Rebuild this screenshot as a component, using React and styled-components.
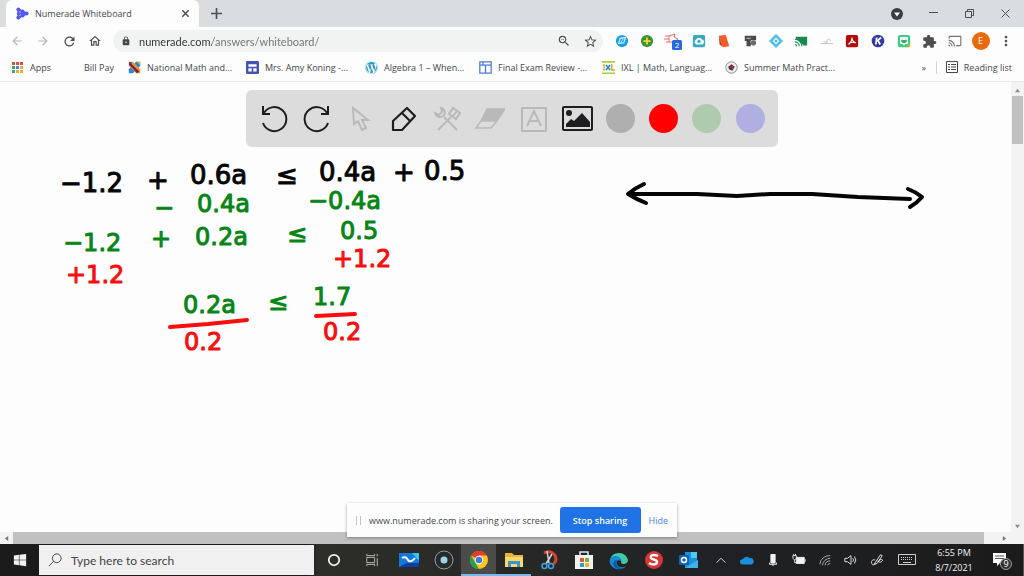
import React from "react";
import styled, { createGlobalStyle } from "styled-components";
import { FaWindows, FaWordpress } from "react-icons/fa";
import {
  MdArrowBack,
  MdArrowForward,
  MdCast,
  MdExtension,
  MdLock,
  MdMoreVert,
  MdOutlineHome,
  MdRefresh,
  MdStarBorder,
  MdZoomOut,
} from "react-icons/md";

const GlobalStyles = createGlobalStyle`
  * {
    box-sizing: border-box;
  }
  body {
    margin: 0;
    font-family: "Open Sans", "Noto Sans", sans-serif;
    font-size: 9px;
    color: #44474b;
  }
  button, input {
    margin: 0;
    padding: 0;
    border: 0;
    background: none;
    font: inherit;
    color: inherit;
  }
  input {
    font-family: Lato, "Open Sans", sans-serif;
  }
  a {
    color: inherit;
    text-decoration: none;
  }
  svg {
    display: block;
    flex-shrink: 0;
  }
`;

const Page = styled.div`
  display: flex;
  flex-direction: column;
  height: 100vh;
  overflow: hidden;
  background: #fdfdfd;
`;

const TabStrip = styled.header`
  display: flex;
  align-items: stretch;
  height: 27px;
  padding-left: 6px;
  background: #dadddf;
`;

const Tab = styled.div`
  display: flex;
  align-items: center;
  gap: 6px;
  width: 193px;
  padding: 0 8px 0 10px;
  border-radius: 6px 6px 0 0;
  background: #fdfdfd;
  span {
    flex: 1;
    white-space: nowrap;
  }
`;

const IconButton = styled.button`
  display: flex;
  align-items: center;
  justify-content: center;
  width: ${(props) => props.$width || "26px"};
  color: ${(props) => props.$color || "#4b4e52"};
`;

const WindowControls = styled.div`
  display: flex;
  margin-left: auto;
`;

const Toolbar = styled.nav`
  display: flex;
  align-items: center;
  height: 28px;
  padding: 0 5px 0 4px;
`;

const AddressBar = styled.div`
  display: flex;
  align-items: center;
  flex: 1;
  height: 22px;
  margin: 0 6px 0 5px;
  padding-left: 8px;
  border-radius: 11px;
  background: #f1f2f2;
  input {
    flex: 1;
    min-width: 0;
    margin-left: 8px;
    font-size: 11px;
    outline: none;
    color: transparent;
    background: linear-gradient(90deg, #2f3336 73px, #6c7074 73px);
    background-clip: text;
  }
`;

const Extensions = styled.div`
  display: flex;
  flex: 0 0 410px;
  button {
    flex: 1;
    width: auto;
  }
`;

const Avatar = styled.span`
  width: 18px;
  height: 18px;
  border-radius: 50%;
  background: #ea6a0b;
  color: #fff;
  line-height: 18px;
  text-align: center;
`;

const Bookmarks = styled.nav`
  display: grid;
  grid-template-columns: 60px 57px 118px 119px 114px 123px 123px 1fr auto auto;
  align-items: center;
  height: 27px;
  padding: 0 12px 2px 11px;
  border-bottom: 1px solid #e6e6e6;
`;

const Bookmark = styled.a`
  display: flex;
  align-items: center;
  gap: 6px;
  white-space: nowrap;
`;

const ReadingList = styled(Bookmark)`
  margin-left: 8px;
  padding-left: 9px;
  border-left: 1px solid #d5d5d5;
`;

const Viewport = styled.main`
  position: relative;
  flex: 1;
  display: grid;
  grid-template-columns: 1fr 13px;
  grid-template-rows: 1fr 12px;
  min-height: 0;
`;

const Canvas = styled.svg`
  width: 100%;
  height: 100%;
  min-height: 0;
  overflow: visible;
  path {
    fill: none;
    stroke-width: 4px;
    stroke-linecap: round;
    stroke-linejoin: round;
  }
`;

const Note = styled.text`
  font-family: "DejaVu Sans", sans-serif;
  font-size: ${(props) => (props.$large ? "26px" : "24px")};
  fill: ${(props) => props.$color};
  stroke: ${(props) => props.$color};
  stroke-width: 1px;
  stroke-linejoin: round;
`;

const VerticalScroll = styled.div`
  display: flex;
  flex-direction: column;
  align-items: center;
  padding: 6px 0 3px;
  background: #f3f3f3;
  color: #8a8a8a;
  i {
    width: 11px;
    height: 48px;
    margin: 3px 0 auto;
    background: #c1c1c1;
  }
`;

const HorizontalScroll = styled.div`
  grid-column: 1 / -1;
  display: flex;
  align-items: center;
  padding: 0 17px 0 4px;
  background: #f3f3f3;
  color: #777;
  i {
    flex: 1;
    align-self: stretch;
    margin: 0 18px 0 4px;
    background: #c1c1c1;
  }
`;

const DrawTools = styled.div`
  position: absolute;
  top: 8px;
  left: 50%;
  transform: translateX(-50%);
  display: flex;
  width: 532px;
  height: 57px;
  padding: 0 6px;
  border-radius: 6px;
  background: #dcdcdc;
`;

const Tool = styled.button`
  display: flex;
  flex: 1;
  align-items: center;
  justify-content: center;
  color: ${(props) => (props.$muted ? "#b9b9b9" : "#1c1e1f")};
`;

const Swatch = styled.span`
  width: 29px;
  height: 29px;
  border-radius: 50%;
  background: ${(props) => props.$color};
`;

const ShareBar = styled.div`
  position: absolute;
  bottom: 7px;
  left: 50%;
  transform: translateX(-50%);
  display: flex;
  align-items: center;
  width: 330px;
  height: 34px;
  padding: 0 9px;
  background: #fdfdfd;
  box-shadow: 0 1px 3px rgba(0, 0, 0, 0.35);
  p {
    flex: 1;
    margin: 0 0 0 8px;
    white-space: nowrap;
  }
  a {
    margin-left: 8px;
    color: #4285e8;
  }
`;

const Grip = styled.i`
  width: 5px;
  height: 9px;
  border: solid #c4c4c4;
  border-width: 0 1px;
`;

const StopButton = styled.button`
  flex-shrink: 0;
  width: 81px;
  height: 26px;
  border-radius: 3px;
  background: #1f73e4;
  color: #fff;
  font-weight: 600;
`;

const Taskbar = styled.footer`
  display: flex;
  height: 32px;
  background: linear-gradient(90deg, #1b1b1b 0 30%, #2d2e28 31%, #292a27 45%, #202124 70%, #1b1b1b);
  color: #f2f2f2;
`;

const SearchBox = styled.label`
  display: flex;
  align-items: center;
  gap: 9px;
  width: 275px;
  margin: 1px 1px 1px 0;
  padding-left: 9px;
  background: #f0f0f0;
  color: #333;
  input {
    flex: 1;
    min-width: 0;
    font-size: 12px;
    outline: none;
  }
  input::placeholder {
    color: #444;
    opacity: 1;
  }
`;

const TaskButton = styled.button`
  display: flex;
  align-items: center;
  justify-content: center;
  width: ${(props) => props.$width || "35px"};
  background: ${(props) => (props.$active ? "#4b4c4a" : "transparent")};
  border-bottom: 2px solid ${(props) => (props.$open ? "#76b9ed" : "transparent")};
  border-top: 2px solid transparent;
`;

const Tray = styled.div`
  display: flex;
  margin-left: auto;
  padding-right: 3px;
  border-right: 1px solid #555;
`;

const Clock = styled.time`
  width: 60px;
  padding-top: 1px;
  font-size: 9px;
  line-height: 15px;
  text-align: center;
  white-space: nowrap;
`;

const Icon = ({ size = 14, box = 16, children, ...rest }) => (
  <svg
    width={size}
    height={size}
    viewBox={`0 0 ${box} ${box}`}
    fill="none"
    stroke="currentColor"
    aria-hidden="true"
    {...rest}
  >
    {children}
  </svg>
);

const Arrow = ({ d }) => (
  <Icon size={5} box={6} fill="currentColor" stroke="none">
    <path d={d} />
  </Icon>
);

const NumeradeLogo = () => (
  <Icon size={13} stroke="#5b5ff0" strokeWidth="2.500">
    <path d="M3 2.500v11M3 3l10 5M3 13l10-5M3 8h9" />
    <g fill="#5357ee" stroke="none">
      <circle cx="3" cy="3" r="2.500" />
      <circle cx="3" cy="8" r="2" />
      <circle cx="3" cy="13" r="2.500" />
      <circle cx="8" cy="5.500" r="2.500" />
      <circle cx="8" cy="10.500" r="2.500" />
      <circle cx="13" cy="8" r="2.500" />
    </g>
  </Icon>
);

const extensions = [
  {
    name: "Compass",
    icon: (
      <Icon stroke="none">
        <circle cx="8" cy="8" r="7" fill="#16a0ea" />
        <path d="M4 11l2-6 6-1-2 6z" fill="none" stroke="#d9f2ff" strokeWidth="1.3" />
        <path d="M6.5 10l3-4.5" stroke="#d9f2ff" />
      </Icon>
    ),
  },
  {
    name: "Add",
    icon: (
      <Icon stroke="none">
        <circle cx="8" cy="8" r="7" fill="#3c9138" />
        <path d="M8 4v8M4 8h8" stroke="#f2dd28" strokeWidth="2" />
      </Icon>
    ),
  },
  {
    name: "Recorder, 2 new",
    icon: (
      <Icon size={18} box={18} stroke="#ee6b69">
        <path d="M1 4h4M0 7h5M2 10h3M5 4l6-2-1 3 4 2-4 3H5z" />
        <rect x="8" y="8" width="10" height="10" rx="1.5" fill="#2869df" stroke="none" />
        <text x="13" y="16" fill="#fff" stroke="none" fontSize="8" textAnchor="middle">2</text>
      </Icon>
    ),
  },
  {
    name: "Cloud",
    icon: (
      <Icon stroke="none">
        <rect x="1" y="1" width="14" height="14" rx="2" fill="#39a9bd" />
        <path d="M5 12a3 3 0 01-.5-5.5 4 4 0 017-.2A3 3 0 0112 12z" fill="#e9fbff" />
        <circle cx="8" cy="8.5" r="1.8" fill="#39a9bd" />
      </Icon>
    ),
  },
  {
    name: "Office",
    icon: (
      <Icon stroke="none">
        <path d="M2 2l8-1 4 13-7 1z" fill="#f45b2b" />
        <path d="M2 2l5 13-4-3z" fill="#c73f16" />
      </Icon>
    ),
  },
  {
    name: "Camera",
    icon: (
      <Icon stroke="none">
        <path d="M2 2h13v5H9v7H4V8H2z" fill="#4b4b4b" />
        <path d="M4 5h5M8 9h6M10 12h4" stroke="#a8a8a8" strokeWidth="1.5" />
        <circle cx="12" cy="10" r="3" fill="#6c6c6c" />
      </Icon>
    ),
  },
  {
    name: "Diamond",
    icon: (
      <Icon stroke="none">
        <path d="M8 0l8 8-8 8-8-8z" fill="#51bceb" />
        <path d="M8 4l4 4-4 4-4-4z" fill="#d9f4ff" />
        <circle cx="8" cy="8" r="1.5" fill="#51bceb" />
      </Icon>
    ),
  },
  {
    name: "Cast classroom",
    icon: (
      <Icon stroke="none">
        <path d="M2 3h13v10h-4L2 5z" fill="#188a50" />
        <path d="M1 6a8 8 0 018 8M1 9a5 5 0 015 5M1 12a2 2 0 012 2" stroke="#188a50" strokeWidth="1.3" />
      </Icon>
    ),
  },
  {
    name: "Hanger",
    icon: (
      <Icon stroke="#bdbdbd">
        <path d="M1 11h14M8 11V7q3-3 4 1M4 9h4" />
      </Icon>
    ),
  },
  {
    name: "Acrobat",
    icon: (
      <Icon>
        <rect x="1" y="1" width="14" height="14" rx="2" fill="#b30b0b" stroke="none" />
        <path d="M4 12c2-1 4-5 4-8M8 4c0 3 2 6 4.500 6M4 11c2-1.500 5-2 8-1" stroke="#fff" strokeWidth="1.2" />
      </Icon>
    ),
  },
  {
    name: "Kami",
    icon: (
      <Icon>
        <circle cx="8" cy="8" r="7.2" fill="#2f3aa5" stroke="none" />
        <path d="M6.500 4l-1 8M11.500 4l-5 4.500M8 7.500l2.500 4.500" stroke="#fff" strokeWidth="2" />
      </Icon>
    ),
  },
  {
    name: "Bitmoji",
    icon: (
      <Icon>
        <rect x="1" y="1" width="14" height="14" rx="2.500" fill="#3acb85" stroke="none" />
        <path d="M3.500 3.500h9v8h-3l-1.500 2-1.500-2h-3z" fill="#fff" stroke="none" />
        <path d="M5 7.500h6c-.5 3.500-5.500 3.500-6 0zM6 5v1M10 5v1" fill="#2fa76d" stroke="#2fa76d" />
        <path d="M12 12h3v2l-1 1h-2z" fill="#f5a623" stroke="none" />
      </Icon>
    ),
  },
  { name: "Extensions", icon: <MdExtension size={15} /> },
  { name: "Cast", icon: <MdCast size={14} color="#777" /> },
  { name: "Profile", icon: <Avatar>E</Avatar> },
  { name: "Menu", icon: <MdMoreVert size={16} /> },
];

const dots = ["#df4b3f", "#df4b3f", "#d44c45", "#43a564", "#4687d9", "#e6b03a", "#43a564", "#e6b03a", "#e6b03a"];

const bookmarks = [
  {
    label: "Apps",
    icon: (
      <Icon size={13} box={13} stroke="none">
        {dots.map((color, i) => (
          <rect key={i} x={1 + (i % 3) * 4} y={1 + Math.floor(i / 3) * 4} width="3" height="3" fill={color} />
        ))}
      </Icon>
    ),
  },
  { label: "Bill Pay", icon: <Icon size={7} /> },
  {
    label: "National Math and...",
    icon: (
      <Icon size={13} stroke="none">
        <path d="M15 1v5l-9 9H1v-5l9-9z" fill="#278bd0" />
        <path d="M11 1h4v4z" fill="#f5b12b" />
        <path d="M1 1l5 0 9 9v5h-5L1 6z" fill="#f09a24" />
        <path d="M3 2l11 11-3 2L1 4z" fill="#7d1f5a" />
        <path d="M1 1l4 1-3 4z" fill="#333b8e" />
      </Icon>
    ),
  },
  {
    label: "Mrs. Amy Koning -...",
    icon: (
      <Icon size={13} stroke="none">
        <rect width="16" height="16" rx="1.500" fill="#4354b2" />
        <path d="M3 4h10v3H3zM3 9h4v4H3zM9 9h4v4H9z" fill="#fff" />
      </Icon>
    ),
  },
  { label: "Algebra 1 – When...", icon: <FaWordpress size={13} color="#2b9cc4" /> },
  {
    label: "Final Exam Review -...",
    icon: (
      <Icon size={13} stroke="#4b78d8" strokeWidth="1.500">
        <path d="M1 1h14v14H1zM1 5h14M8 5v10M5 1v4" />
      </Icon>
    ),
  },
  {
    label: "IXL | Math, Languag...",
    icon: (
      <Icon size={13} stroke="none">
        <path d="M0 1h16M0 15h16" stroke="#9fd431" strokeWidth="2" />
        <path d="M1 5h3M1 11h3M2.500 5v6" stroke="#e0a82c" strokeWidth="1.500" />
        <path d="M5 5l5 6M10 5l-5 6" stroke="#1f8fcb" strokeWidth="2" />
        <path d="M12 4v7h4" stroke="#e0a82c" strokeWidth="2" />
      </Icon>
    ),
  },
  {
    label: "Summer Math Pract...",
    icon: (
      <Icon size={13} stroke="#777">
        <circle cx="8" cy="8" r="7" fill="#eee" />
        <path d="M4 7l4-3 4 3-3 5-4-2z" fill="#333c4a" stroke="none" />
        <path d="M8 5l3 2-2 3-3-2z" fill="#c3232f" stroke="none" />
      </Icon>
    ),
  },
];

const tools = [
  {
    name: "Undo",
    icon: (
      <Icon size={28} box={28} strokeWidth="2">
        <path d="M3 18a12 12 0 1 0 .5-9M3 1v8h7" />
      </Icon>
    ),
  },
  {
    name: "Redo",
    icon: (
      <Icon size={28} box={28} strokeWidth="2">
        <path d="M25 18a12 12 0 1 1-.5-9M25 1v8h-7" />
      </Icon>
    ),
  },
  {
    name: "Select",
    muted: true,
    icon: (
      <Icon size={28} box={28} strokeWidth="2">
        <path d="M7 3l1 16 4-3 4 9 4-2-4-8h6z" />
      </Icon>
    ),
  },
  {
    name: "Pen",
    icon: (
      <Icon size={28} box={28} strokeWidth="2.200" strokeLinejoin="round">
        <path d="M3 25v-9L17 3l8 8-13 14zM12 8l8 8" />
      </Icon>
    ),
  },
  {
    name: "Tools",
    muted: true,
    icon: (
      <Icon size={28} box={28} strokeWidth="2">
        <path d="M5 25l13-13M24 25L11 12M2 8c1 4 5 5 8 3s2-7-2-8l1 4-3 3zM16 9l4-6 7 5-4 6zM20 11l4-5" />
      </Icon>
    ),
  },
  {
    name: "Eraser",
    muted: true,
    icon: (
      <Icon size={30} box={30} strokeWidth="1.500">
        <path d="M12 5h18l-8 12H6z" fill="currentColor" />
        <path d="M6 17l-5 7h15l6-7" />
      </Icon>
    ),
  },
  {
    name: "Text",
    muted: true,
    icon: (
      <Icon size={28} box={28} strokeWidth="2">
        <path d="M2 3h24v23H2zM7 21l7-15 7 15M9 16h10" />
      </Icon>
    ),
  },
  {
    name: "Image",
    icon: (
      <Icon size={32} box={32} strokeWidth="2">
        <rect x="2" y="4" width="29" height="23" rx="1" />
        <circle cx="8" cy="10" r="3" fill="currentColor" stroke="none" />
        <path d="M5 24v-3l5-5 3 2 8-8 8 9v5z" fill="currentColor" stroke="none" />
      </Icon>
    ),
  },
];

const swatches = [
  { name: "Grey", color: "#afafaf" },
  { name: "Red", color: "#fe0000" },
  { name: "Green", color: "#afcbaf" },
  { name: "Purple", color: "#b0afe2" },
];

const BLACK = "#050505";
const GREEN = "#088517";
const RED = "#f5100f";

const notes = [
  { x: 60, y: 110, color: BLACK, text: "−1.2", large: true },
  { x: 147, y: 107, color: BLACK, text: "+", large: true },
  { x: 190, y: 102, color: BLACK, text: "0.6a", large: true },
  { x: 276, y: 102, color: BLACK, text: "≤", large: true },
  { x: 319, y: 99, color: BLACK, text: "0.4a", large: true },
  { x: 393, y: 99, color: BLACK, text: "+", large: true },
  { x: 424, y: 98, color: BLACK, text: "0.5", large: true },
  { x: 154, y: 134, color: GREEN, text: "−" },
  { x: 197, y: 130, color: GREEN, text: "0.4a" },
  { x: 308, y: 127, color: GREEN, text: "−0.4a" },
  { x: 63, y: 169, color: GREEN, text: "−1.2" },
  { x: 151, y: 165, color: GREEN, text: "+" },
  { x: 195, y: 163, color: GREEN, text: "0.2a" },
  { x: 287, y: 160, color: GREEN, text: "≤" },
  { x: 340, y: 157, color: GREEN, text: "0.5" },
  { x: 66, y: 201, color: RED, text: "+1.2" },
  { x: 333, y: 185, color: RED, text: "+1.2" },
  { x: 183, y: 231, color: GREEN, text: "0.2a" },
  { x: 268, y: 228, color: GREEN, text: "≤" },
  { x: 313, y: 223, color: GREEN, text: "1.7" },
  { x: 184, y: 268, color: RED, text: "0.2" },
  { x: 323, y: 258, color: RED, text: "0.2" },
];

const strokes = [
  { color: RED, d: "M170 245L208 242L247 238" },
  { color: RED, d: "M316 234L355 232" },
  { color: BLACK, d: "M630 112H697L737 114L770 112H812L858 115L910 117" },
  { color: BLACK, d: "M644 102Q635 106 628 112Q636 117 646 121" },
  { color: BLACK, d: "M908 107Q916 110 922 115Q917 121 910 125" },
];

const taskApps = [
  {
    name: "Whiteboard",
    icon: (
      <Icon size={20} box={20} stroke="none">
        <path d="M0 3h20v14H0z" fill="#1479dc" />
        <path d="M13 3h7v8z" fill="#35c4ef" />
        <path d="M0 17l8-4h12v4z" fill="#0c3f9e" />
        <path d="M3 8c3-2 5 0 6 2s4 2 7-2" stroke="#fff" strokeWidth="2" />
      </Icon>
    ),
  },
  {
    name: "Recorder",
    icon: (
      <Icon size={20} box={20} stroke="#88a1ae">
        <circle cx="10" cy="10" r="9" />
        <circle cx="10" cy="10" r="3.500" fill="#9bd1ee" stroke="none" />
      </Icon>
    ),
  },
  {
    name: "Chrome",
    active: true,
    open: true,
    icon: (
      <Icon size={18} box={18} stroke="none">
        <circle cx="9" cy="9" r="9" fill="#f9c716" />
        <path d="M9 9L1.200 4.500A9 9 0 0116.800 4.500H9z" fill="#e33d31" />
        <path d="M1.200 4.500L5.500 12 9 18A9 9 0 011.200 4.500z" fill="#26a04e" />
        <circle cx="9" cy="9" r="4.200" fill="#fff" />
        <circle cx="9" cy="9" r="3.300" fill="#3b79e5" />
      </Icon>
    ),
  },
  {
    name: "File Explorer",
    open: true,
    icon: (
      <Icon size={18} box={18} stroke="none">
        <path d="M0 2h7l2 2h9v12H0z" fill="#e9b53c" />
        <path d="M0 6h18v10H0z" fill="#fbd867" />
        <path d="M3 10h12v6h-3v-3H6v3H3z" fill="#3c93cf" />
      </Icon>
    ),
  },
  {
    name: "Snip",
    icon: (
      <Icon size={20} box={20}>
        <path d="M5 3c9-4 15 4 10 11" stroke="#d9432b" strokeWidth="3" />
        <path d="M8 1l2 12M13 4L7 14" stroke="#d4d8da" strokeWidth="1.500" />
        <circle cx="5.500" cy="16" r="2.500" stroke="#3da4df" strokeWidth="1.500" />
        <circle cx="12" cy="16" r="2.500" stroke="#3da4df" strokeWidth="1.500" />
      </Icon>
    ),
  },
  {
    name: "Store",
    icon: (
      <Icon size={20} box={20}>
        <path d="M6 6V2h8v4" stroke="#e8e8e8" strokeWidth="1.500" />
        <path d="M1 5h18v14H1z" fill="#f2f2f2" stroke="none" />
        <g stroke="none">
          <path d="M6 8h4v4H6z" fill="#e5532c" />
          <path d="M11 8h4v4h-4z" fill="#79b52c" />
          <path d="M6 13h4v4H6z" fill="#2a9de0" />
          <path d="M11 13h4v4h-4z" fill="#efb51f" />
        </g>
      </Icon>
    ),
  },
  {
    name: "Edge",
    icon: (
      <Icon size={20} box={20} stroke="none">
        <path d="M1 9a9.500 9.500 0 0118 1c0 4-5 5-7 3 1-3-1-6-4-6-4 0-7 2-7 2z" fill="#44c9a8" />
        <path d="M1 9c3-5 11-3 11 2-3-2-5 0-4 3 1 4 6 4 9 2-3 4-9 4-12 2C1 15 0 12 1 9z" fill="#168bd5" />
        <path d="M8 10c-2 5 2 9 7 8-5 3-10 0-11-4 0-2 2-4 4-4z" fill="#0c59a4" />
      </Icon>
    ),
  },
  {
    name: "Snagit",
    icon: (
      <Icon size={18} box={18}>
        <circle cx="9" cy="9" r="9" fill="#d43832" stroke="none" />
        <path d="M13 5c-4-2-8-1-7 2 1 2 6 1 6 4 0 3-5 3-8 1" stroke="#fff" strokeWidth="2.500" />
      </Icon>
    ),
  },
  {
    name: "Outlook",
    icon: (
      <Icon size={20} box={20} stroke="none">
        <path d="M6 2h12v16H6z" fill="#1b91dd" />
        <path d="M12 2h6v6h-6z" fill="#52c8f3" />
        <path d="M6 18l13-8v8z" fill="#3eb1ed" />
        <rect y="5" width="10" height="10" rx="1" fill="#0b64b8" />
        <circle cx="5" cy="10" r="2.500" stroke="#fff" strokeWidth="1.500" />
      </Icon>
    ),
  },
];

const trayIcons = [
  { name: "Hidden icons", icon: <Icon><path d="M3 11l5-5 5 5" /></Icon> },
  {
    name: "OneDrive",
    icon: (
      <Icon stroke="none">
        <path d="M3 13a3 3 0 010-6 5 5 0 018-1 3.500 3.500 0 012 7z" fill="#1a8ee0" />
      </Icon>
    ),
  },
  {
    name: "Microphone",
    icon: (
      <Icon>
        <rect x="5" y="1" width="6" height="11" rx="1" fill="currentColor" stroke="none" />
        <path d="M4 11v2h8v-2M8 12v3" />
      </Icon>
    ),
  },
  {
    name: "Battery",
    icon: (
      <Icon>
        <path d="M5 5h9v7H5z" fill="currentColor" />
        <path d="M15 7v3M1 3h4v3L3 8 1 6zM2 1v2M4 1v2M3 8v3h2" />
      </Icon>
    ),
  },
  {
    name: "Network",
    icon: (
      <Icon stroke="#bcbcbc">
        <path d="M2 13A11 11 0 0114 3M5 14a9 9 0 019-8M8 14a6 6 0 016-5M11 14a3 3 0 013-2" />
      </Icon>
    ),
  },
  {
    name: "Volume",
    icon: (
      <Icon>
        <path d="M1 6h3l4-3v10l-4-3H1zM10 6q2 2 0 4M12 4q3 4 0 8" />
      </Icon>
    ),
  },
  {
    name: "Pen input",
    icon: (
      <Icon>
        <path d="M6 11L12 2l2 1-6 9-3 1zM6 8c-3-1-5 1-4 4s4 1 4-1M9 10c3-4 6-3 5-1s-4 2-5 0" />
      </Icon>
    ),
  },
];

const App = () => {
  return (
    <Page>
      <GlobalStyles />
      <TabStrip>
        <Tab>
          <NumeradeLogo />
          <span>Numerade Whiteboard</span>
          <IconButton $width="12px" aria-label="Close tab">
            <Icon size={9} box={10} strokeWidth="1.600"><path d="M1.500 1.500l7 7M8.500 1.500l-7 7" /></Icon>
          </IconButton>
        </Tab>
        <IconButton $width="34px" aria-label="New tab">
          <Icon size={11} box={11} strokeWidth="1.600"><path d="M5.500 0v11M0 5.500h11" /></Icon>
        </IconButton>
        <WindowControls>
          <IconButton $width="36px" aria-label="Search tabs">
            <Icon size={12} box={12} stroke="none">
              <circle cx="6" cy="6" r="6" fill="#3b3e41" />
              <path d="M3 4.500h6L6 8.500z" fill="#fff" />
            </Icon>
          </IconButton>
          <IconButton $width="36px" aria-label="Minimize">
            <Icon size={9} box={9}><path d="M0 3.500h9" /></Icon>
          </IconButton>
          <IconButton $width="36px" aria-label="Restore">
            <Icon size={9} box={9}><path d="M.5 2.500h6v6h-6zM2.500 2.500v-2h6v6h-2" /></Icon>
          </IconButton>
          <IconButton $width="37px" aria-label="Close window">
            <Icon size={9} box={9}><path d="M.5.500l8 8M8.500.500l-8 8" /></Icon>
          </IconButton>
        </WindowControls>
      </TabStrip>

      <Toolbar>
        <IconButton $color="#b4b6b8" aria-label="Back"><MdArrowBack size={14} /></IconButton>
        <IconButton $color="#b4b6b8" aria-label="Forward"><MdArrowForward size={14} /></IconButton>
        <IconButton aria-label="Reload"><MdRefresh size={15} /></IconButton>
        <IconButton aria-label="Home"><MdOutlineHome size={14} /></IconButton>
        <AddressBar>
          <MdLock size={10} />
          <input aria-label="Address" defaultValue="numerade.com/answers/whiteboard/" />
          <IconButton aria-label="Zoom"><MdZoomOut size={14} /></IconButton>
          <IconButton aria-label="Bookmark this page"><MdStarBorder size={15} /></IconButton>
        </AddressBar>
        <Extensions>
          {extensions.map((item) => (
            <IconButton key={item.name} aria-label={item.name}>{item.icon}</IconButton>
          ))}
        </Extensions>
      </Toolbar>

      <Bookmarks>
        {bookmarks.map((item) => (
          <Bookmark href="#" key={item.label}>
            {item.icon}
            {item.label}
          </Bookmark>
        ))}
        <IconButton $width="8px" aria-label="More bookmarks">»</IconButton>
        <ReadingList href="#">
          <Icon size={12} box={12}>
            <path d="M.5.500h11v11H.5zM2 3.500h2M5 3.500h5M2 6h2M5 6h5M2 8.500h2M5 8.500h5" />
          </Icon>
          Reading list
        </ReadingList>
      </Bookmarks>

      <Viewport>
        <Canvas>
          {notes.map((note, i) => (
            <Note key={i} x={note.x} y={note.y} $color={note.color} $large={note.large}>
              {note.text}
            </Note>
          ))}
          {strokes.map((stroke, i) => (
            <path key={i} d={stroke.d} stroke={stroke.color} />
          ))}
        </Canvas>
        <VerticalScroll>
          <Arrow d="M0 5l3-4 3 4z" />
          <i />
          <Arrow d="M0 1l3 4 3-4z" />
        </VerticalScroll>
        <HorizontalScroll>
          <Arrow d="M5 0L1 3l4 3z" />
          <i />
          <Arrow d="M1 0l4 3-4 3z" />
        </HorizontalScroll>
        <DrawTools>
          {tools.map((tool) => (
            <Tool key={tool.name} $muted={tool.muted} aria-label={tool.name}>
              {tool.icon}
            </Tool>
          ))}
          {swatches.map((swatch) => (
            <Tool key={swatch.name} aria-label={swatch.name}>
              <Swatch $color={swatch.color} />
            </Tool>
          ))}
        </DrawTools>
        <ShareBar>
          <Grip />
          <p>www.numerade.com is sharing your screen.</p>
          <StopButton>Stop sharing</StopButton>
          <a href="#">Hide</a>
        </ShareBar>
      </Viewport>

      <Taskbar>
        <TaskButton $width="39px" aria-label="Start"><FaWindows size={14} /></TaskButton>
        <SearchBox>
          <Icon size={14}><circle cx="10" cy="6" r="5" /><path d="M6.500 9.500L1 15" /></Icon>
          <input placeholder="Type here to search" aria-label="Search" />
        </SearchBox>
        <TaskButton $width="38px" aria-label="Cortana">
          <Icon size={14} strokeWidth="2"><circle cx="8" cy="8" r="6" /></Icon>
        </TaskButton>
        <TaskButton $width="38px" aria-label="Task view">
          <Icon size={14} stroke="#c5c5c5"><path d="M2 1v2h9V1M2 5h9v6H2zM2 15v-2h9v2M14 1v3M14 6v9" /></Icon>
        </TaskButton>
        {taskApps.map((app) => (
          <TaskButton key={app.name} $active={app.active} $open={app.open} aria-label={app.name}>
            {app.icon}
          </TaskButton>
        ))}
        <Tray>
          {trayIcons.map((item) => (
            <TaskButton key={item.name} $width="26px" aria-label={item.name}>{item.icon}</TaskButton>
          ))}
          <TaskButton $width="34px" aria-label="Keyboard">
            <Icon size={18} box={18} stroke="#cfcfcf">
              <path d="M.5 3.500h17v10H.5z" />
              <path d="M3 6.500h12M3 8.500h12" strokeDasharray="1 1" />
              <path d="M5 11.500h8" />
            </Icon>
          </TaskButton>
          <Clock>
            6:55 PM
            <br />
            8/7/2021
          </Clock>
          <TaskButton $width="36px" aria-label="Notifications, 9 new">
            <Icon size={20} box={20} stroke="none">
              <path d="M1 3h13v10H8l-3 3v-3H1z" fill="#fff" />
              <path d="M3 6h9M3 8.500h9" stroke="#555" />
              <circle cx="14" cy="14" r="5.500" fill="#333" stroke="#999" />
              <text x="14" y="17" fill="#fff" fontSize="9" textAnchor="middle">9</text>
            </Icon>
          </TaskButton>
        </Tray>
      </Taskbar>
    </Page>
  );
};

export default App;
